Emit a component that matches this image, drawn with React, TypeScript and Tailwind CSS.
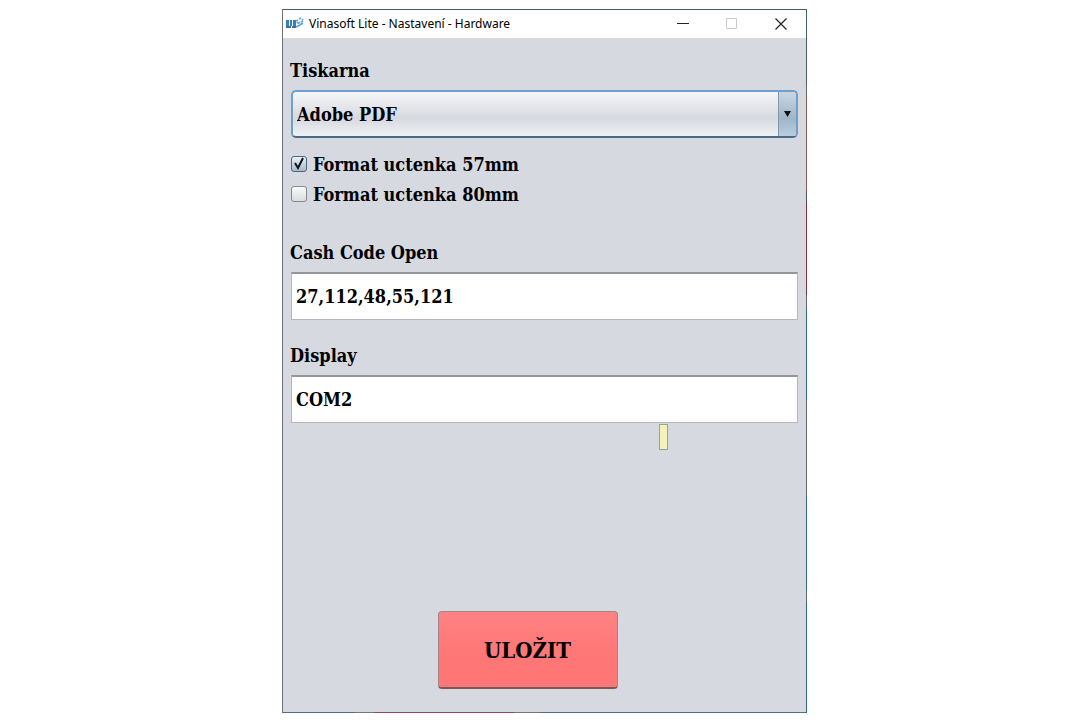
import { useState } from "react";

const labelClass = "block pl-[7px] text-[18px] leading-6";
const inputClass =
  "mt-[7px] block h-12 w-full border border-[#b4b8be] border-t-2 border-t-[#93979c] bg-white px-1 text-[18px] outline-none";

function AppLogo() {
  return (
    <svg width="18" height="14" viewBox="0 0 18 14" className="shrink-0" aria-hidden="true">
      <path d="M0 3h3v6H0z M4 3h2v6H4z M7 3h3v6H7z" fill="#2f83bd" />
      <path d="M0 9h5v2H0z M6 9h4v2H6z" fill="#4668a5" />
      <path
        d="M10 4l2-1M12 7l2-2M13 2l2-1M15 5l2-1M10 10l4-2M14 8l3-2M11 6l1-1M16 2l1 1"
        stroke="#5da3d3"
        strokeWidth="1.6"
      />
    </svg>
  );
}

function TitleBar() {
  return (
    <header className="flex h-7 items-center bg-white pr-px pl-[3px] font-['Noto_Sans','Open_Sans',sans-serif] text-[12px]">
      <AppLogo />
      <h1 className="ml-[5px] flex-1">Vinasoft Lite - Nastavení - Hardware</h1>
      <button aria-label="Minimize" className="flex h-7 w-[49px] items-center justify-center">
        <svg width="12" height="12" viewBox="0 0 12 12">
          <path d="M0 5.500h12" stroke="#222" />
        </svg>
      </button>
      <button aria-label="Maximize" disabled className="flex h-7 w-[49px] items-center justify-center">
        <svg width="12" height="12" viewBox="0 0 12 12" fill="none">
          <path d="M.5.5h10v10H.5z" stroke="#c9c9c9" />
        </svg>
      </button>
      <button aria-label="Close" className="flex h-7 w-[49px] items-center justify-center">
        <svg width="12" height="12" viewBox="0 0 12 12">
          <path d="M.5.5l11 11M11.5.5l-11 11" stroke="#222" strokeWidth="1.2" />
        </svg>
      </button>
    </header>
  );
}

interface CheckRowProps {
  label: string;
  checked: boolean;
  onChange: (checked: boolean) => void;
}

function CheckRow({ label, checked, onChange }: CheckRowProps) {
  return (
    <label className="flex h-[30px] items-center gap-[6px] pl-2 text-[18px]">
      <span className="grid">
        <input
          type="checkbox"
          checked={checked}
          onChange={(e) => onChange(e.target.checked)}
          className="peer col-start-1 row-start-1 size-4 appearance-none rounded-[3px] border border-[#85898f] bg-linear-to-b from-[#fafafb] to-[#d9dce1] checked:border-[#4f6479] checked:from-[#eaf1f7] checked:to-[#a3bacd]"
        />
        <svg
          viewBox="0 0 16 16"
          className="pointer-events-none invisible col-start-1 row-start-1 size-4 overflow-visible peer-checked:visible"
        >
          <path d="M4 7l3 5 5-10" fill="none" stroke="#111" strokeWidth="2" />
        </svg>
      </span>
      {label}
    </label>
  );
}

export default function App() {
  const [printer, setPrinter] = useState("Adobe PDF");
  const [format57, setFormat57] = useState(true);
  const [format80, setFormat80] = useState(false);
  const [cashCode, setCashCode] = useState("27,112,48,55,121");
  const [display, setDisplay] = useState("COM2");

  return (
    <div className="flex min-h-screen justify-center bg-white py-[9px] pl-px text-black">
      <div className="grid w-full max-w-[525px] grid-cols-[1px_1fr_1px] grid-rows-[1px_1fr_1px] bg-[#3f6069]">
        <div className="col-start-1 row-span-3 row-start-1 bg-[#6d7278]" />
        <div className="col-start-3 row-span-3 row-start-1 bg-[linear-gradient(#3f6069_76px,#666_76px_88px,#8a5f50_88px_181px,#555_181px_194px,#85343f_194px_286px,#666_286px_299px,#35697c_299px_392px,#666_392px_488px,#35697c_488px_581px,#666_581px_593px,#35697c_593px)]" />
        <div className="col-start-2 row-start-3 bg-[linear-gradient(to_right,#4b7082_72px,#777_72px_91px,#954550_91px_231px,#777_231px_257px,#4b7082_257px)]" />
        <div className="col-start-2 row-start-2 flex min-w-0 flex-col bg-[#d6d9e0]">
          <TitleBar />
          <form
            onSubmit={(e) => e.preventDefault()}
            className="flex flex-1 flex-col pt-[21px] pb-[23px] font-['DejaVu_Serif_Condensed','DejaVu_Serif',serif] font-bold"
          >
            <label htmlFor="printer" className={labelClass}>
              Tiskarna
            </label>
            <div className="mx-2 mt-[7px] grid">
              <select
                id="printer"
                value={printer}
                onChange={(e) => setPrinter(e.target.value)}
                className="col-start-1 row-start-1 h-12 appearance-none rounded-[5px] border-2 border-[#6f9fca] border-b-[#4c6a87] bg-linear-to-b from-[#f5f6f8] via-[#d6d9df] via-60% to-[#f0f2f5] px-1 text-[18px] outline-none"
              >
                <option>Adobe PDF</option>
              </select>
              <span className="pointer-events-none col-start-1 row-start-1 my-[2px] mr-[2px] flex w-[18px] items-center justify-center justify-self-end rounded-r-[3px] border-l border-[#7f98ad] bg-linear-to-b from-[#c9d7e3] via-[#9fb5c8] via-60% to-[#b9cfe0]">
                <svg width="7" height="6" viewBox="0 0 7 6">
                  <path d="M0 0h7L3.500 6z" fill="#111" />
                </svg>
              </span>
            </div>

            <div className="mt-[11px]">
              <CheckRow label="Format uctenka 57mm" checked={format57} onChange={setFormat57} />
              <CheckRow label="Format uctenka 80mm" checked={format80} onChange={setFormat80} />
            </div>

            <label htmlFor="cash-code" className={`mt-8 ${labelClass}`}>
              Cash Code Open
            </label>
            <div className="mx-2">
              <input
                id="cash-code"
                type="text"
                value={cashCode}
                onChange={(e) => setCashCode(e.target.value)}
                className={inputClass}
              />
            </div>

            <label htmlFor="display" className={`mt-6 ${labelClass}`}>
              Display
            </label>
            <div className="relative mx-2">
              <input
                id="display"
                type="text"
                value={display}
                onChange={(e) => setDisplay(e.target.value)}
                className={inputClass}
              />
              {/* empty tooltip under the field */}
              <span
                role="tooltip"
                className="absolute top-full right-[130px] mt-px h-[26px] w-[9px] border border-[#9b9fa6] bg-[#f3f3b9]"
              />
            </div>

            <button
              type="submit"
              className="mt-auto mr-[34px] h-[78px] w-[180px] self-center rounded-[4px] border border-[#a48587] border-b-2 border-b-[#7d5659] bg-linear-to-b from-[#ff8282] to-[#ff7676] to-60% pt-[2px] text-[22px]"
            >
              ULOŽIT
            </button>
          </form>
        </div>
      </div>
    </div>
  );
}
